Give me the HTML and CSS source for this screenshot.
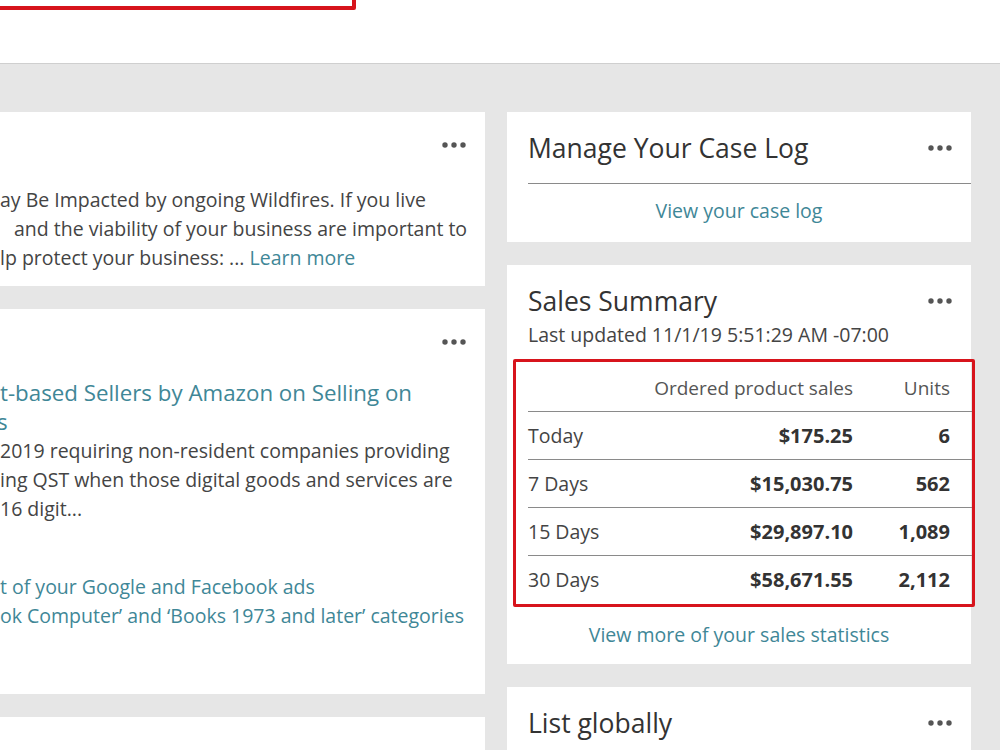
FILE: index.html
```html
<!DOCTYPE html>
<html lang="en">
<head>
  <meta charset="UTF-8">
  <meta name="viewport" content="width=device-width, initial-scale=1.0">
  <title>Seller Central Dashboard</title>
  <link rel="stylesheet" href="styles.css">
</head>
<body>
  <div class="topbar">
    <div class="highlight-top"></div>
  </div>

  <div class="dashboard">
    <div class="column left">
      <div class="card news">
        <div class="card-head"><span></span><svg class="dots" width="24" height="6" viewBox="0 0 24 6"><circle cx="3" cy="3" r="2.7"/><circle cx="12" cy="3" r="2.7"/><circle cx="21" cy="3" r="2.7"/></svg></div>
        <div class="text">
          <div>ay Be Impacted by ongoing Wildfires. If you live</div>
          <div class="indent">and the viability of your business are important to</div>
          <div>lp protect your business: ... <a href="#">Learn more</a></div>
        </div>
      </div>

      <div class="card news tall">
        <div class="card-head"><span></span><svg class="dots" width="24" height="6" viewBox="0 0 24 6"><circle cx="3" cy="3" r="2.7"/><circle cx="12" cy="3" r="2.7"/><circle cx="21" cy="3" r="2.7"/></svg></div>
        <div class="news-title">
          <div>t-based Sellers by Amazon on Selling on</div>
          <div class="pull">s</div>
        </div>
        <div class="text">
          <div>2019 requiring non-resident companies providing</div>
          <div>ing QST when those digital goods and services are</div>
          <div>16 digit...</div>
        </div>
        <div class="text links">
          <div><a href="#">t of your Google and Facebook ads</a></div>
          <div><a href="#">ok Computer’ and ‘Books 1973 and later’ categories</a></div>
        </div>
      </div>

      <div class="card news"></div>
    </div>

    <div class="column right">
      <div class="card">
        <div class="card-head">
          <h2>Manage Your Case Log</h2>
          <svg class="dots" width="24" height="6" viewBox="0 0 24 6"><circle cx="3" cy="3" r="2.7"/><circle cx="12" cy="3" r="2.7"/><circle cx="21" cy="3" r="2.7"/></svg>
        </div>
        <div class="divider"></div>
        <div class="card-link"><a href="#">View your case log</a></div>
      </div>

      <div class="card">
        <div class="card-head">
          <h2>Sales Summary</h2>
          <svg class="dots" width="24" height="6" viewBox="0 0 24 6"><circle cx="3" cy="3" r="2.7"/><circle cx="12" cy="3" r="2.7"/><circle cx="21" cy="3" r="2.7"/></svg>
        </div>
        <div class="updated">Last updated 11/1/19 5:51:29 AM -07:00</div>
        <div class="highlight">
          <div class="sales-row head">
            <span></span>
            <span class="num">Ordered product sales</span>
            <span class="num units">Units</span>
          </div>
          <div class="sales-row">
            <span>Today</span>
            <span class="num bold">$175.25</span>
            <span class="num units bold">6</span>
          </div>
          <div class="sales-row">
            <span>7 Days</span>
            <span class="num bold">$15,030.75</span>
            <span class="num units bold">562</span>
          </div>
          <div class="sales-row">
            <span>15 Days</span>
            <span class="num bold">$29,897.10</span>
            <span class="num units bold">1,089</span>
          </div>
          <div class="sales-row last">
            <span>30 Days</span>
            <span class="num bold">$58,671.55</span>
            <span class="num units bold">2,112</span>
          </div>
        </div>
        <div class="card-link after"><a href="#">View more of your sales statistics</a></div>
      </div>

      <div class="card">
        <div class="card-head">
          <h2>List globally</h2>
          <svg class="dots" width="24" height="6" viewBox="0 0 24 6"><circle cx="3" cy="3" r="2.7"/><circle cx="12" cy="3" r="2.7"/><circle cx="21" cy="3" r="2.7"/></svg>
        </div>
      </div>
    </div>
  </div>
</body>
</html>
```

FILE: styles.css
```css
html, body {
  margin: 0;
  padding: 0;
}
body {
  font-family: "Open Sans", Roboto, sans-serif;
  background-color: #e6e6e6;
  color: #444444;
  height: 750px;
  overflow: hidden;
}
a {
  color: #3f8797;
  text-decoration: none;
}

/* white strip on top, with the end of a red marker box */
.topbar {
  position: relative;
  height: 63px;
  background-color: #ffffff;
  border-bottom: 1px solid #cfcfcf;
}
.highlight-top {
  position: absolute;
  left: -10px;
  top: -60px;
  width: 358px;
  height: 62px;
  border: 4px solid #d7141c;
  border-radius: 2px;
}

.dashboard {
  display: flex;
  gap: 22px;
  padding-top: 48px;
}
.column {
  display: flex;
  flex-direction: column;
  gap: 23px;
}
.column.left {
  width: 505px;
  margin-left: -20px;
}
.column.right {
  width: 464px;
}

.card {
  background-color: #ffffff;
  padding: 17px 0 15px 21px;
}
.card-head {
  display: flex;
  justify-content: space-between;
  align-items: center;
  height: 38px;
  padding-right: 19px;
}
.card-head h2 {
  margin: 0;
  font-size: 26.5px;
  font-weight: 400;
  color: #333333;
}
.dots {
  fill: #555555;
}

/* news cards on the left, cut by the window edge */
.card.news {
  padding: 18px 0 14px 20px;
}
.card.news .card-head {
  height: 30px;
}
.card.news.tall {
  padding-bottom: 64px;
}
.card.news:last-child {
  flex: 1;
}
.text {
  margin-top: 25px;
  font-size: 19.5px;
  line-height: 29px;
  white-space: nowrap;
}
.news-title {
  margin-top: 21px;
  font-size: 22.3px;
  line-height: 29px;
  color: #3f8797;
  white-space: nowrap;
}
.news-title + .text {
  margin-top: 0;
}
.text.links {
  margin-top: 49px;
}
.indent {
  padding-left: 14px;
}
.pull {
  margin-left: -3px;
}

.divider {
  margin-top: 16px;
  height: 1px;
  background-color: #8a8a8a;
}
.card-link {
  margin-top: 13px;
  padding-right: 21px;
  padding-bottom: 2px;
  text-align: center;
  font-size: 19.5px;
  line-height: 28px;
}
.card-link.after {
  margin-top: 14px;
  padding-bottom: 0;
}

.updated {
  font-size: 19.5px;
  line-height: 26px;
  margin-top: 2px;
  color: #444444;
}

/* red marker round the sales table */
.highlight {
  margin: 11px -4px 0 -15px;
  padding-left: 12px;
  border: 3px solid #d7141c;
  border-radius: 2px;
}
.sales-row {
  display: grid;
  grid-template-columns: 1fr 220px 119px;
  font-size: 19.5px;
  line-height: 28px;
  padding: 10px 0 9px;
  border-bottom: 1px solid #8a8a8a;
}
.sales-row.head {
  padding: 12px 0 9px;
  font-size: 19px;
  color: #555555;
}
.sales-row.last {
  border-bottom: none;
  padding-bottom: 10px;
}
.num {
  text-align: right;
}
.units {
  padding-right: 22px;
}
.bold {
  font-weight: 700;
  font-size: 20px;
  color: #333333;
}
```
